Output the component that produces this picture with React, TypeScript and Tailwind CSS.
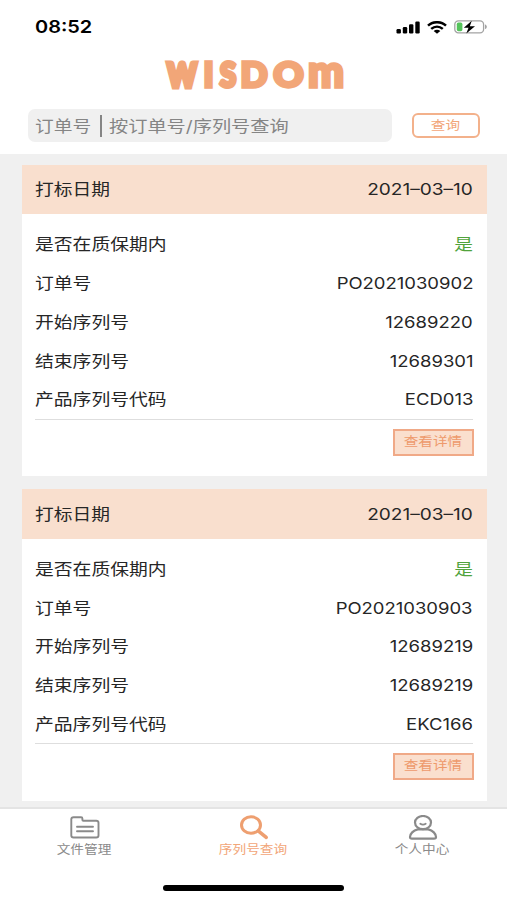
type Order = {
  date: string;
  inWarranty: string;
  orderNo: string;
  start: string;
  end: string;
  code: string;
};

const orders: Order[] = [
  { date: "2021–03–10", inWarranty: "是", orderNo: "PO2021030902", start: "12689220", end: "12689301", code: "ECD013" },
  { date: "2021–03–10", inWarranty: "是", orderNo: "PO2021030903", start: "12689219", end: "12689219", code: "EKC166" },
];

function StatusBar() {
  return (
    <div className="flex h-[54px] items-center justify-between pl-[35px] pr-[19px]">
      <span className="origin-left scale-x-[1.14] text-[17.5px] font-semibold text-black">08:52</span>
      <div className="flex items-center gap-[7px]">
        <svg width="24" height="13" viewBox="0 0 24 13">
          <rect x="0.5" y="8" width="4.4" height="4.5" rx="1.2" />
          <rect x="6.8" y="6" width="4.4" height="6.5" rx="1.2" />
          <rect x="13" y="3.3" width="4.4" height="9.2" rx="1.2" />
          <rect x="19.3" y="0.5" width="4.4" height="12" rx="1.2" />
        </svg>
        <svg width="20" height="13" viewBox="0 0 20 13" fill="none" stroke="#000" strokeWidth="2.5">
          <path d="M1 4.6C6 .1 14 .1 19 4.6" />
          <path d="M4.2 7.9c3.5-3 8.1-3 11.6 0" />
          <path d="M6.7 9.9c1.9-1.5 4.7-1.5 6.6 0L10 12.8Z" fill="#000" stroke="none" />
        </svg>
        <svg width="34" height="14" viewBox="0 0 34 14">
          <rect x="0.8" y="0.8" width="28.8" height="12" rx="3.6" fill="none" stroke="#a3a3a3" strokeWidth="1.3" />
          <path d="M31 4.5c2.4.6 2.4 4 0 4.6Z" fill="#a3a3a3" />
          <rect x="2.8" y="2.6" width="5.6" height="8.6" rx="1.6" fill="#55c35b" />
          <path d="M17.8.8 9.8 7.8h4.7L12.3 13.4l8.7-7.2h-5.2Z" fill="#000" />
        </svg>
      </div>
    </div>
  );
}

function Logo() {
  return (
    <svg
      width="200"
      height="58"
      viewBox="0 0 200 58"
      className="mx-auto overflow-visible"
      fill="#f2a678"
      stroke="#f2a678"
      strokeWidth="3.4"
      strokeLinejoin="miter"
      strokeMiterlimit="2"
      fontFamily="Lato, sans-serif"
      fontWeight="900"
      fontSize="33.5"
    >
      <text x="13.5" y="42.5" fontSize="32" strokeWidth="5" textLength="29" lengthAdjust="spacingAndGlyphs">W</text>
      <text x="49.5" y="42.5">I</text>
      <text x="66" y="42.5" strokeWidth="4.2" textLength="16" lengthAdjust="spacingAndGlyphs">S</text>
      <text x="86.5" y="42.5" textLength="27" lengthAdjust="spacingAndGlyphs">D</text>
      <text x="119.5" y="42.5" textLength="30" lengthAdjust="spacingAndGlyphs">O</text>
      <text x="154" y="42.5" fontSize="44" textLength="36" lengthAdjust="spacingAndGlyphs">m</text>
    </svg>
  );
}

function SearchBar() {
  return (
    <div className="flex items-center justify-between pl-7 pr-[27px]">
      <div className="flex h-[33px] w-[364px] items-center rounded-[7px] bg-[#f0f0f0] pl-[7px] text-[#858585]">
        <span className="w-[65px] whitespace-nowrap">
          <span className="inline-block origin-left scale-x-[1.17] text-[16px]">订单号</span>
        </span>
        <span className="h-[22px] w-[1.5px] bg-[#858585]" />
        <span className="ml-[7px] inline-block origin-left scale-x-[1.2] whitespace-nowrap text-[16px]">
          按订单号/序列号查询
        </span>
      </div>
      <button className="flex h-[25px] w-[68px] items-center justify-center rounded-[6px] border-2 border-[#f3b18b] text-[#f2a678]">
        <span className="relative top-px scale-x-[1.17] text-[12.5px]">查询</span>
      </button>
    </div>
  );
}

function Row({ label, value, green }: { label: string; value: string; green?: boolean }) {
  return (
    <div className="flex h-[38.75px] items-center justify-between">
      <span className="origin-left scale-x-[1.175]">{label}</span>
      <span className={green ? "origin-right scale-x-[1.17] text-[#50a33b]" : "origin-right scale-x-[1.155]"}>{value}</span>
    </div>
  );
}

function OrderCard({ order }: { order: Order }) {
  return (
    <div className="h-[311.5px] bg-white text-[16px] text-[#262626]">
      <div className="flex h-[49.5px] items-center justify-between bg-[#f9dfce] pl-[13.5px] pr-[14px]">
        <span className="origin-left scale-x-[1.17]">打标日期</span>
        <span className="origin-right scale-x-[1.19]">{order.date}</span>
      </div>
      <div className="pl-[13.5px] pr-[14px] pt-[11px]">
        <div className="border-b border-[#dedede]">
          <Row label="是否在质保期内" value={order.inWarranty} green />
          <Row label="订单号" value={order.orderNo} />
          <Row label="开始序列号" value={order.start} />
          <Row label="结束序列号" value={order.end} />
          <Row label="产品序列号代码" value={order.code} />
        </div>
        <div className="flex justify-end pt-[9px]">
          <button className="-mr-px flex h-[27px] w-[81px] items-center justify-center border-2 border-[#f0a987] bg-[#fadfce] text-[#ee9a6c]">
            <span className="scale-x-[1.17] whitespace-nowrap text-[12.5px]">查看详情</span>
          </button>
        </div>
      </div>
    </div>
  );
}

function TabBar() {
  return (
    <nav className="h-[93px] border-t-2 border-[#e4e4e4] bg-white">
      <div className="grid grid-cols-3 pt-[6px] text-[12px] text-[#8a8a8a]">
        <div className="flex flex-col items-center">
          <svg width="30" height="25" viewBox="0 0 30 25" fill="none" stroke="currentColor" strokeWidth="1.9" strokeLinecap="round">
            <path d="M3.6 2.2h7.5q1.3 0 1.3 1.3v1.4q0 .8.9.8h12.9q2.3 0 2.3 2v12.8q0 2-2.3 2H3.6q-2.3 0-2.3-2V4.2q0-2 2.3-2Z" />
            <path d="M7 11.7h16M7 16.3h16" />
          </svg>
          <span className="scale-x-[1.14] leading-5">文件管理</span>
        </div>
        <div className="flex flex-col items-center text-[#f2a678]">
          <svg width="30" height="25" viewBox="0 0 30 25" fill="none" stroke="#ee9f70" strokeLinecap="round">
            <ellipse cx="12" cy="10" rx="9.5" ry="8.2" strokeWidth="3" />
            <path d="m19.5 16.2 7.7 6.2" strokeWidth="3.6" />
          </svg>
          <span className="scale-x-[1.14] leading-5">序列号查询</span>
        </div>
        <div className="flex flex-col items-center">
          <svg width="30" height="25" viewBox="0 0 30 25" fill="none" stroke="currentColor" strokeWidth="2.2" strokeLinecap="round">
            <ellipse cx="15" cy="7.6" rx="8" ry="6.6" />
            <path d="M9.8 14.4h10.4C24.8 15.4 28 18.8 28 22q0 1.7-2 1.7H4q-2 0-2-1.7c0-3.2 3.2-6.6 7.8-7.6Z" />
            <path d="M12.3 8.7q2.7 1.8 5.4 0" strokeWidth="1.8" />
          </svg>
          <span className="scale-x-[1.14] leading-5">个人中心</span>
        </div>
      </div>
      <div className="mx-auto mt-[25px] h-[6px] w-[181px] rounded-full bg-black" />
    </nav>
  );
}

export default function App() {
  return (
    <div className="flex h-[900px] w-[507px] flex-col overflow-hidden bg-[#f0f0f0] font-['Inter','Noto_Sans_CJK_SC',sans-serif]">
      <header className="h-[154px] shrink-0 bg-white">
        <StatusBar />
        <div className="-mt-[10px] mb-[7px] flex">
          <Logo />
        </div>
        <SearchBar />
      </header>
      <main className="flex flex-1 flex-col gap-[13px] pl-[21.5px] pr-5 pt-[10.5px]">
        {orders.map((o) => (
          <OrderCard key={o.orderNo} order={o} />
        ))}
      </main>
      <TabBar />
    </div>
  );
}
